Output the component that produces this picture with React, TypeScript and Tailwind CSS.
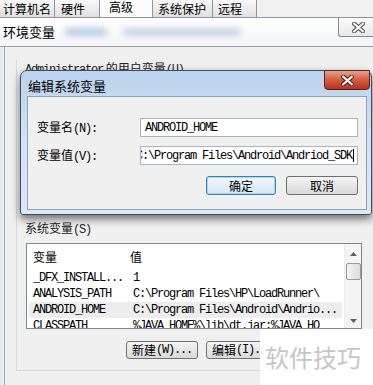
import React from "react";

const cjk = "font-['Noto_Sans_CJK_SC','Noto_Sans',sans-serif]";
const mono = "font-['Liberation_Mono','Noto_Sans_CJK_SC',monospace]";

function XGlyph({ w, h, dark, light }: { w: number; h: number; dark: string; light: string }) {
  return (
    <svg width={w} height={h} viewBox="0 0 12 10">
      <path d="M2 1.5 L10 8.5 M10 1.5 L2 8.5" stroke={dark} strokeWidth="4" strokeLinecap="square" />
      <path d="M2 1.5 L10 8.5 M10 1.5 L2 8.5" stroke={light} strokeWidth="2" strokeLinecap="square" />
    </svg>
  );
}

export default function App() {
  return (
    <div className={`relative w-[373px] h-[385px] overflow-hidden bg-[#f0f0f0] text-black ${cjk}`}>
      {/* Tabs */}
      <div className="flex h-[18px] bg-[#eeeeee] border-b border-[#8e959e] whitespace-nowrap">
        <div className="w-[55px] h-full border-r border-[#8e959e] bg-gradient-to-b from-[#f8f8f8] to-[#e0e0e0] text-[12px] leading-[17px] pl-[3px]">计算机名</div>
        <div className="w-[45px] h-full border-r border-[#8e959e] bg-gradient-to-b from-[#f8f8f8] to-[#e0e0e0] text-[12px] leading-[17px] pl-[6px]">硬件</div>
        <div className="w-[53px] h-full border-r border-[#8e959e] bg-[#fbfbfb] text-[12px] leading-[13px] pl-[9px]">高级</div>
        <div className="w-[60px] h-full border-r border-[#8e959e] bg-gradient-to-b from-[#f8f8f8] to-[#e0e0e0] text-[12px] leading-[17px] pl-[5px]">系统保护</div>
        <div className="w-[44px] h-full border-r border-[#8e959e] bg-gradient-to-b from-[#f8f8f8] to-[#e0e0e0] text-[12px] leading-[17px] pl-[5px]">远程</div>
        <div className="flex-1 bg-[#f1f1f1]" />
      </div>

      {/* Environment variables window */}
      <div className="flex flex-col h-[367px]">
        <div className="relative h-[29px] border-b border-[#9c9c9c] bg-gradient-to-b from-[#ffffff] to-[#f3f5f8] flex items-center pl-[3px]">
          <span className="text-[13px]">环境变量</span>
          <span className="ml-[10px] w-[42px] h-[8px] rounded-full bg-[#9fb8d8] blur-[3px] opacity-70" />
          <span className="ml-[16px] w-[118px] h-[8px] rounded-full bg-[#a6bcd8] blur-[3px] opacity-60" />
          <div className="absolute right-0 top-0 w-[35px] h-[19px] border-l border-b border-[#8a8a8a] rounded-bl-[3px] bg-gradient-to-b from-[#fdfdfd] to-[#e8e8e8] flex items-center justify-center pl-[5px]">
            <XGlyph w={13} h={11} dark="#5c5c5c" light="#f4f4f4" />
          </div>
        </div>
        <div className="flex flex-1">
          <div className="w-[5px] bg-[#e4edf5] border-r border-[#a3adb8]" />
          <div className="flex-1 pl-[11px] bg-[#f0f0f0]">
            <div className="mt-[13px] h-[311px] border-l border-b border-[#d3dbe2] pl-[8px]">
              <div className="mt-[3px] text-[12px] leading-[16px] text-[#222] whitespace-nowrap">
                <span className={`${mono} text-[12px] tracking-[-1.2px]`}>Administrator</span> 的用户变量<span className={`${mono} text-[12px] tracking-[-1.2px]`}>(U)</span>
              </div>
              <div className="mt-[142px] text-[12px] leading-[16px] text-[#222]">
                系统变量<span className={`${mono} tracking-[-1.2px]`}>(S)</span>
              </div>
              <div className="relative ml-[1px] mt-[5px] w-[336px] h-[86px] border border-[#828790] bg-white overflow-hidden">
                <div className="flex h-[26px] items-center text-[12px]">
                  <div className="w-[97px] pl-[6px]">变量</div>
                  <div className="pl-[6px]">值</div>
                </div>
                {[
                  ["_DFX_INSTALL...", "1", false],
                  ["ANALYSIS_PATH", "C:\\Program Files\\HP\\LoadRunner\\", false],
                  ["ANDROID_HOME", "C:\\Program Files\\Android\\Andrio...", true],
                  ["CLASSPATH", "%JAVA_HOME%\\lib\\dt.jar;%JAVA_HO", false],
                ].map(([a, b, sel]) => (
                  <div
                    key={a as string}
                    className={`flex h-[16px] items-center mr-[19px] ml-[2px] text-[12px] tracking-[-1.2px] whitespace-nowrap ${mono} ${sel ? "bg-[#ededed]" : ""}`}
                  >
                    <div className="w-[95px] pl-[4px]">{a as string}</div>
                    <div className="pl-[9px]">{b as string}</div>
                  </div>
                ))}
                <div className="absolute right-0 top-0 bottom-0 w-[17px] bg-[#f4f4f4] border-l border-[#ececec] flex flex-col items-center">
                  <div className="h-[19px] flex items-center justify-center">
                    <svg width="7" height="4" viewBox="0 0 7 4"><path d="M0 4 L3.5 0 L7 4 Z" fill="#606060" /></svg>
                  </div>
                  <div className="w-[15px] h-[17px] border border-[#9a9a9a] rounded-[2px] bg-gradient-to-r from-[#f4f4f4] to-[#dcdcdc]" />
                  <div className="flex-1" />
                  <div className="h-[14px] flex items-center justify-center">
                    <svg width="7" height="4" viewBox="0 0 7 4"><path d="M0 0 L3.5 4 L7 0 Z" fill="#606060" /></svg>
                  </div>
                </div>
              </div>
              <div className="mt-[12px] flex gap-[8px] pl-[101px]">
                <div className="w-[72px] h-[18px] border border-[#707070] rounded-[3px] bg-gradient-to-b from-[#f4f4f4] to-[#d9d9d9] flex items-center justify-center text-[12px] whitespace-nowrap">
                  新建<span className={`${mono} tracking-[-1.2px] text-[12px]`}>(W)...</span>
                </div>
                <div className="w-[72px] h-[18px] border border-[#707070] rounded-[3px] bg-gradient-to-b from-[#f4f4f4] to-[#d9d9d9] flex items-center justify-center text-[12px] whitespace-nowrap">
                  编辑<span className={`${mono} tracking-[-1.2px] text-[12px]`}>(I)...</span>
                </div>
              </div>
            </div>
          </div>
        </div>
      </div>

      {/* Edit system variable dialog */}
      <div className="absolute left-[20px] top-[70px] w-[352px] h-[145px] border border-[#3f4f63] rounded-t-[7px] rounded-b-[3px] bg-gradient-to-b from-[#bcd3ec] via-[#d3e2f3] to-[#dbe8f6] shadow-[0_4px_8px_rgba(0,0,0,0.55)] flex flex-col">
        <div className="relative h-[25px] flex items-center pl-[7px] pt-[4px]">
          <span className="text-[13px]">编辑系统变量</span>
          <div className="absolute right-[1px] -top-px w-[46px] h-[20px] border border-[#5b2218] rounded-b-[4px] bg-gradient-to-b from-[#e6a28f] via-[#d15c44] to-[#b8321c] flex items-center justify-center">
            <XGlyph w={13} h={11} dark="#5a2216" light="#ffffff" />
          </div>
        </div>
        <div className="ml-[6px] mr-[4px] h-[114px] border border-[#8ea2bd] bg-[#f0f0f0]">
          <div className="mt-[21px] flex items-center h-[19px]">
            <div className="w-[112px] pl-[9px] text-[12px] whitespace-nowrap">
              变量名<span className={`${mono} text-[12px] tracking-[-1.2px]`}>(N):</span>
            </div>
            <div className={`w-[218px] h-[19px] border border-[#a9b5c4] bg-white pl-[4px] flex items-center text-[12px] tracking-[-1.2px] ${mono}`}>
              ANDROID_HOME
            </div>
          </div>
          <div className="mt-[9px] flex items-center h-[19px]">
            <div className="w-[112px] pl-[9px] text-[12px] whitespace-nowrap">
              变量值<span className={`${mono} text-[12px] tracking-[-1.2px]`}>(V):</span>
            </div>
            <div className={`w-[218px] h-[19px] border border-[#a9b5c4] bg-white overflow-hidden flex items-center text-[12px] tracking-[-1.2px] whitespace-nowrap ${mono}`}>
              <span className="-ml-[5px]">C:\Program Files\Android\Andriod_SDK</span>
              <span className="ml-[1px] w-px h-[13px] bg-black" />
            </div>
          </div>
          <div className="mt-[11px] flex justify-end gap-[10px] pr-[8px]">
            <div className="w-[70px] h-[19px] border border-[#3c7fb1] rounded-[3px] bg-gradient-to-b from-[#f2f8fc] to-[#d4e6f3] shadow-[inset_0_0_0_1px_#a7d8f5] flex items-center justify-center text-[12px]">确定</div>
            <div className="w-[72px] h-[19px] border border-[#707070] rounded-[3px] bg-gradient-to-b from-[#f4f4f4] to-[#d9d9d9] flex items-center justify-center text-[12px]">取消</div>
          </div>
        </div>
      </div>

      {/* Watermark */}
      <div className="absolute right-0 bottom-0 w-[113px] h-[56px] bg-white flex items-center pl-[5px]">
        <span className="text-[24px] leading-none text-[#c6c6c6]">软件技巧</span>
      </div>
    </div>
  );
}
